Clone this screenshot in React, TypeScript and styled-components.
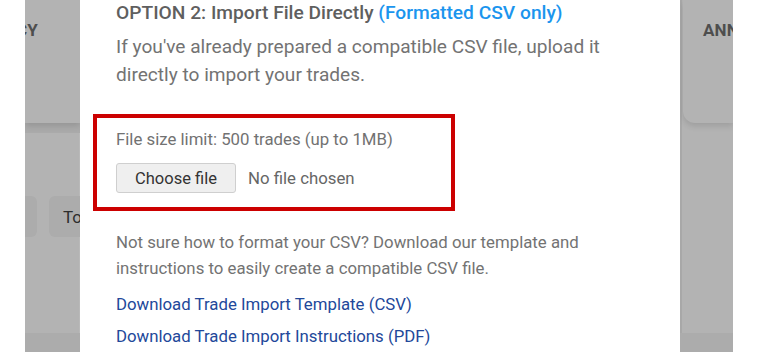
import React from "react";
import styled, { createGlobalStyle } from "styled-components";

const GlobalStyle = createGlobalStyle`
  html, body {
    margin: 0;
    padding: 0;
    background: #ffffff;
  }
  body {
    font-family: Roboto, "Liberation Sans", Arial, sans-serif;
  }
`;

const Page = styled.div`
  display: grid;
  grid-template-columns: 25px 55px 600px 53px 1fr;
  height: 352px;
  overflow: hidden;
  background: #ffffff;
`;

const Blank = styled.div`
  background: #ffffff;
`;

const Backdrop = styled.div<{ $edge?: boolean }>`
  display: flex;
  flex-direction: column;
  background: #b3b3b3;
  overflow: hidden;
  box-shadow: ${(p) => (p.$edge ? "inset 2px 0 0 #a8a8a8" : "inset -1px 0 0 #b9b9b9")};
`;

const DimCard = styled.div<{ $align: "start" | "end" }>`
  height: 123px;
  flex-shrink: 0;
  display: flex;
  justify-content: ${(p) => (p.$align === "end" ? "flex-end" : "flex-start")};
  padding: 20px ${(p) => (p.$align === "end" ? "42px" : "0")} 0 ${(p) => (p.$align === "end" ? "0" : "20px")};
  box-sizing: border-box;
  background: #b3b3b3;
  border-bottom-left-radius: ${(p) => (p.$align === "start" ? "12px" : "0")};
  margin-left: ${(p) => (p.$align === "start" ? "3px" : "0")};
  box-shadow: 0 3px 6px rgba(0, 0, 0, 0.12);
  position: relative;
  z-index: 1;
`;

const DimTitle = styled.div`
  font-size: 17px;
  font-weight: 700;
  color: #4e4e4e;
  white-space: nowrap;
  letter-spacing: 0.2px;
`;

const ShadowBand = styled.div`
  height: 10px;
  flex-shrink: 0;
  background: #aaaaaa;
`;

const Gap = styled.div<{ $h: number }>`
  height: ${(p) => p.$h}px;
  flex-shrink: 0;
`;

const Fill = styled.div`
  flex: 1;
`;

const DimToolbar = styled.div`
  display: flex;
  gap: 12px;
  height: 41px;
  flex-shrink: 0;
  justify-content: flex-end;
  margin-right: -40px;
`;

const DimButton = styled.div`
  width: 71px;
  flex-shrink: 0;
  border-radius: 6px;
  background: #acacac;
  display: flex;
  align-items: center;
  padding-left: 14px;
  box-sizing: border-box;
  font-size: 17px;
  color: #2e2e2e;
`;

const BottomBand = styled.div`
  height: 19px;
  flex-shrink: 0;
  background: #acacac;
`;

const Modal = styled.div`
  background: #ffffff;
  padding: 0 0 0 36px;
  box-sizing: border-box;
  display: flex;
  flex-direction: column;
`;

const Heading = styled.div`
  font-size: 19.2px;
  font-weight: 500;
  color: #5f5f5f;
  line-height: 26px;
  white-space: nowrap;
`;

const Accent = styled.span`
  color: #1b95ee;
`;

const Lead = styled.p`
  margin: 7px 0 0;
  font-size: 19.1px;
  line-height: 28px;
  color: #737373;
  width: 500px;
`;

const Highlight = styled.div`
  margin: 25px 0 0 -23px;
  width: 362px;
  height: 97px;
  box-sizing: border-box;
  border: 4px solid #cc0000;
  padding: 10px 0 0 19px;
  display: flex;
  flex-direction: column;
  gap: 13px;
`;

const Note = styled.div`
  font-size: 16.8px;
  line-height: 22px;
  color: #727272;
`;

const FileRow = styled.div`
  display: flex;
  align-items: center;
  gap: 12px;
`;

const FileButton = styled.button`
  width: 120px;
  height: 30px;
  border: 1px solid #cfcfcf;
  border-radius: 3px;
  background: #efefef;
  font-family: Roboto, "Liberation Sans", Arial, sans-serif;
  font-size: 16.5px;
  color: #333333;
  padding: 0;
`;

const FileState = styled.span`
  font-size: 16.8px;
  color: #666666;
`;

const Help = styled.p`
  margin: 18px 0 0;
  font-size: 16.8px;
  line-height: 26px;
  color: #737373;
  width: 490px;
`;

const Links = styled.div`
  display: flex;
  flex-direction: column;
  margin-top: 11px;
  gap: 8px;
`;

const DocLink = styled.a`
  font-size: 16.8px;
  line-height: 24px;
  color: #22489a;
  text-decoration: none;
  white-space: nowrap;
`;

export default function App() {
  return (
    <>
      <GlobalStyle />
      <Page>
        <Blank />
        <Backdrop>
          <DimCard $align="end">
            <DimTitle>FREQUENCY</DimTitle>
          </DimCard>
          <ShadowBand />
          <Gap $h={63} />
          <DimToolbar>
            <DimButton />
            <DimButton>To</DimButton>
          </DimToolbar>
          <Fill />
          <BottomBand />
        </Backdrop>
        <Modal>
          <Heading>
            OPTION 2: Import File Directly <Accent>(Formatted CSV only)</Accent>
          </Heading>
          <Lead>
            If you've already prepared a compatible CSV file, upload it directly to import your trades.
          </Lead>
          <Highlight>
            <Note>File size limit: 500 trades (up to 1MB)</Note>
            <FileRow>
              <FileButton type="button">Choose file</FileButton>
              <FileState>No file chosen</FileState>
            </FileRow>
          </Highlight>
          <Help>
            Not sure how to format your CSV? Download our template and instructions to easily create a
            compatible CSV file.
          </Help>
          <Links>
            <DocLink href="#">Download Trade Import Template (CSV)</DocLink>
            <DocLink href="#">Download Trade Import Instructions (PDF)</DocLink>
          </Links>
        </Modal>
        <Backdrop $edge>
          <DimCard $align="start">
            <DimTitle>ANNUAL</DimTitle>
          </DimCard>
          <Fill />
          <BottomBand />
        </Backdrop>
        <Blank />
      </Page>
    </>
  );
}
